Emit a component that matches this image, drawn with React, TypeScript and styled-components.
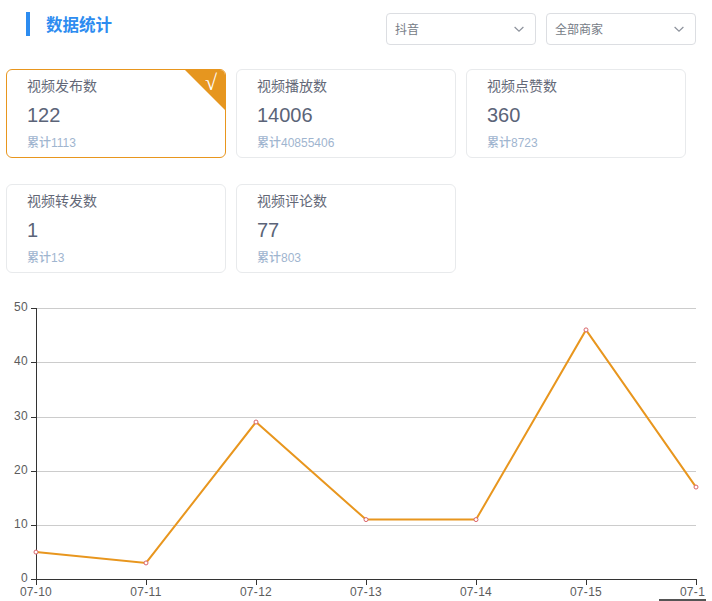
import React from 'react';
import styled, { createGlobalStyle } from 'styled-components';

const GlobalStyle = createGlobalStyle`
  html, body {
    margin: 0;
    padding: 0;
    background: #fff;
    overflow: hidden;
    font-family: 'Liberation Sans', 'Noto Sans CJK SC', sans-serif;
  }
`;

const stats = [
  { label: '视频发布数', value: '122', total: '累计1113', active: true },
  { label: '视频播放数', value: '14006', total: '累计40855406' },
  { label: '视频点赞数', value: '360', total: '累计8723' },
  { label: '视频转发数', value: '1', total: '累计13' },
  { label: '视频评论数', value: '77', total: '累计803' },
];

const days = ['07-10', '07-11', '07-12', '07-13', '07-14', '07-15', '07-16'];
const series = [5, 3, 29, 11, 11, 46, 17];

const STEP = 110;
const Y0 = 579.2;
const UNIT = 5.42;
const px = (i: number) => 36 + i * STEP;
const py = (v: number) => Y0 - v * UNIT;
const snap = (v: number) => Math.round(py(v)) + 0.5;

const Chevron = () => (
  <svg width="12" height="12" viewBox="0 0 12 12" fill="none" stroke="#8d929c" strokeWidth="1.2">
    <path d="M1.6 4 L6 8.2 L10.4 4" />
  </svg>
);

const Select: React.FC<{ value: string }> = ({ value }) => (
  <SelectBox>
    <SelectText>{value}</SelectText>
    <Chevron />
  </SelectBox>
);

const StatCard: React.FC<{ label: string; value: string; total: string; active?: boolean }> = ({
  label,
  value,
  total,
  active,
}) => (
  <Card $active={active}>
    {active && (
      <Corner>
        <Check>√</Check>
      </Corner>
    )}
    <CardLabel>{label}</CardLabel>
    <CardValue>{value}</CardValue>
    <CardTotal>{total}</CardTotal>
  </Card>
);

const LineChart = () => (
  <ChartSvg width="705" height="301" viewBox="0 300 705 301">
    {[10, 20, 30, 40, 50].map((v) => (
      <line key={v} x1="36" x2="696" y1={snap(v)} y2={snap(v)} stroke="#ccc" />
    ))}
    <line x1="36.5" x2="36.5" y1="308" y2="579" stroke="#333" />
    <line x1="31" x2="696" y1="579.5" y2="579.5" stroke="#333" />
    {[0, 10, 20, 30, 40, 50].map((v) => (
      <g key={v}>
        <line x1="31" x2="36" y1={snap(v)} y2={snap(v)} stroke="#333" />
        <AxisText x="28" y={py(v) + 3} textAnchor="end">
          {v}
        </AxisText>
      </g>
    ))}
    {days.map((d, i) => (
      <g key={d}>
        <line x1={px(i) + 0.5} x2={px(i) + 0.5} y1="579" y2="585" stroke="#333" />
        <AxisText x={px(i)} y="596" textAnchor="middle">
          {d}
        </AxisText>
      </g>
    ))}
    <polyline
      points={series.map((v, i) => `${px(i)},${py(v)}`).join(' ')}
      fill="none"
      stroke="#e8961e"
      strokeWidth="2"
    />
    {series.map((v, i) => (
      <circle key={i} cx={px(i)} cy={py(v)} r="2" fill="#fff" stroke="#d9646a" strokeWidth="1" />
    ))}
  </ChartSvg>
);

export default function App() {
  return (
    <Page>
      <GlobalStyle />
      <Header>
        <Title>数据统计</Title>
        <Filters>
          <Select value="抖音" />
          <Select value="全部商家" />
        </Filters>
      </Header>
      <CardGrid>
        {stats.map((s) => (
          <StatCard key={s.label} {...s} />
        ))}
      </CardGrid>
      <ChartWrap>
        <LineChart />
      </ChartWrap>
      <ScrollThumb />
    </Page>
  );
}

const Page = styled.div`
  position: relative;
  width: 712px;
  height: 601px;
  overflow: hidden;
  background: #fff;
`;

const Header = styled.div`
  display: flex;
  justify-content: space-between;
  align-items: flex-start;
  height: 69px;
  padding: 12px 16px 0 26px;
  box-sizing: border-box;
`;

const Title = styled.h2`
  margin: 0;
  height: 24px;
  padding-left: 16px;
  border-left: 4px solid #2d8cf0;
  color: #2d8cf0;
  font-size: 16.5px;
  font-weight: 700;
  line-height: 26px;
`;

const Filters = styled.div`
  display: flex;
  gap: 10px;
  margin-top: 1px;
`;

const SelectBox = styled.div`
  display: flex;
  align-items: center;
  justify-content: space-between;
  width: 150px;
  height: 32px;
  box-sizing: border-box;
  padding: 0 10px 0 8px;
  border: 1px solid #dcdee2;
  border-radius: 4px;
`;

const SelectText = styled.span`
  margin-top: -2px;
  color: #757b85;
  font-size: 12px;
`;

const CardGrid = styled.div`
  display: grid;
  grid-template-columns: repeat(3, 220px);
  grid-auto-rows: 89px;
  column-gap: 10px;
  row-gap: 26px;
  padding-left: 6px;
`;

const Card = styled.div<{ $active?: boolean }>`
  position: relative;
  overflow: hidden;
  box-sizing: border-box;
  padding: 6px 0 0 20px;
  border: 1px solid ${(p) => (p.$active ? '#e8961e' : '#e8eaec')};
  border-radius: 6px;
  background: #fff;
`;

const Corner = styled.div`
  position: absolute;
  top: -1px;
  right: -1px;
  width: 42px;
  height: 42px;
  background: #e6961f;
  clip-path: polygon(0 0, 100% 0, 100% 100%);
`;

const Check = styled.span`
  position: absolute;
  top: 3px;
  right: 9px;
  color: #fff;
  font-family: 'Liberation Serif', serif;
  font-size: 22px;
  font-weight: 400;
  line-height: 22px;
`;

const CardLabel = styled.div`
  color: #636877;
  font-size: 14px;
  line-height: 20px;
`;

const CardValue = styled.div`
  margin-top: 7px;
  color: #5b6478;
  font-size: 20px;
  line-height: 24px;
`;

const CardTotal = styled.div`
  margin-top: 8px;
  color: #9fb5cf;
  font-size: 12px;
  font-weight: 500;
  line-height: 16px;
`;

const ChartWrap = styled.div`
  margin-top: 27px;
  width: 705px;
  height: 301px;
  overflow: hidden;
`;

const ChartSvg = styled.svg`
  display: block;
`;

const AxisText = styled.text`
  fill: #5c5c5c;
  font-size: 12px;
  letter-spacing: 0.3px;
`;

const ScrollThumb = styled.div`
  position: absolute;
  left: 659px;
  bottom: 0;
  width: 47px;
  height: 2px;
  background: #555;
`;
